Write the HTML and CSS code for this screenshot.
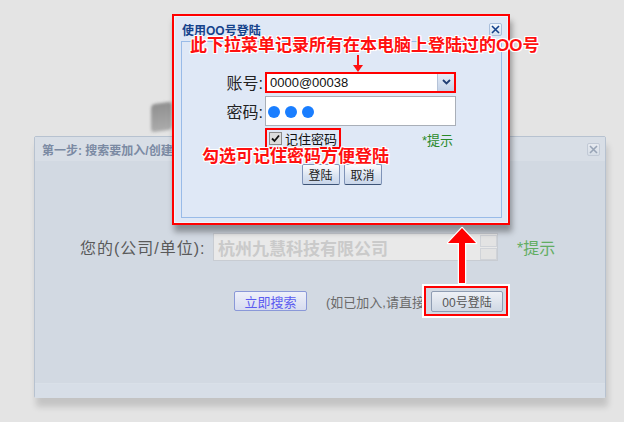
FILE: index.html
```html
<!DOCTYPE html>
<html lang="zh-CN">
<head>
    <meta charset="UTF-8">
    <title>OO号登陆</title>
    <link rel="stylesheet" href="styles.css">
</head>
<body>
    <div class="page">
        <div class="blob"></div>

        <!-- background window: step one -->
        <div class="back-win">
            <div class="back-title">
                <span>第一步: 搜索要加入/创建</span>
                <span class="tool tool-faded">
                    <svg width="9" height="9" viewBox="0 0 9 9"><path d="M1 1L8 8M8 1L1 8" stroke="#98a4b6" stroke-width="1.6"/></svg>
                </span>
            </div>
            <div class="back-body">
                <div class="company-row">
                    <label class="company-label">您的(公司/单位):</label>
                    <div class="company-input">
                        <span class="company-text">杭州九慧科技有限公司</span>
                        <span class="spin">
                            <span class="spin-btn"></span>
                            <span class="spin-btn"></span>
                        </span>
                    </div>
                    <span class="tip-big">*提示</span>
                </div>
                <div class="search-row">
                    <button class="btn btn-search">立即搜索</button>
                    <span class="hint-text">(如已加入,请直接</span>
                    <span class="mark-frame">
                        <button class="btn btn-oo">00号登陆</button>
                    </span>
                </div>
            </div>
            <div class="back-foot"></div>
        </div>

        <!-- login window -->
        <div class="front-win">
            <div class="front-inner">
                <div class="front-title">
                    <span>使用OO号登陆</span>
                    <span class="tool">
                        <svg width="9" height="9" viewBox="0 0 9 9"><path d="M1 1L8 8M8 1L1 8" stroke="#15428b" stroke-width="1.6"/></svg>
                    </span>
                </div>
                <div class="panel">
                    <div class="login-form">
                        <label class="form-label">账号:</label>
                        <div class="combo">
                            <span class="combo-text">0000@00038</span>
                            <span class="combo-trigger">
                                <svg width="9" height="6" viewBox="0 0 9 6"><path d="M1 1L4.5 4.5L8 1" fill="none" stroke="#1f3d73" stroke-width="1.8"/></svg>
                            </span>
                        </div>

                        <label class="form-label">密码:</label>
                        <div class="password">
                            <span class="dot"></span>
                            <span class="dot"></span>
                            <span class="dot"></span>
                        </div>

                        <span></span>
                        <div class="remember-row">
                            <span class="remember">
                                <span class="checkbox">
                                    <svg width="11" height="11" viewBox="0 0 11 11"><path d="M2 5.5L4.5 8L9 2.5" fill="none" stroke="#111" stroke-width="1.8"/></svg>
                                </span>
                                记住密码
                            </span>
                            <span class="tip-small">*提示</span>
                        </div>
                    </div>
                    <div class="form-buttons">
                        <button class="btn btn-small">登陆</button>
                        <button class="btn btn-small">取消</button>
                    </div>
                </div>
            </div>
        </div>

        <!-- callouts -->
        <div class="callout callout-top">此下拉菜单记录所有在本电脑上登陆过的OO号</div>
        <div class="callout callout-mid">勾选可记住密码方便登陆</div>

        <svg class="arrow-small" width="16" height="20" viewBox="0 0 16 20">
            <path d="M8 1V12" stroke="#ff1010" stroke-width="2"/>
            <path d="M3 11H13L8 18Z" fill="#ff1010"/>
        </svg>
        <svg class="arrow-big" width="34" height="62" viewBox="0 0 34 62">
            <path d="M17 3L31 18H20V58H14V18H3Z" fill="#ff0000" stroke="#fff" stroke-width="2.5" stroke-linejoin="round" paint-order="stroke"/>
        </svg>
    </div>
</body>
</html>
```

FILE: styles.css
```css
body {
    margin: 0;
    padding: 0;
    background: #e4e4e4;
    font-family: "Liberation Sans", "Noto Sans CJK SC", sans-serif;
}

.page {
    position: relative;
    width: 624px;
    height: 422px;
    overflow: hidden;
}

.blob {
    position: absolute;
    left: 151px;
    top: 103px;
    width: 21px;
    height: 28px;
    border-radius: 4px;
    background: linear-gradient(#8f8f8f, #ababab);
    filter: blur(1.5px);
    transform: skewY(-8deg);
}

/* ---------- back window ---------- */

.back-win {
    position: absolute;
    left: 34px;
    top: 136px;
    width: 570px;
    height: 260px;
    border: 1px solid #b7c2d0;
    border-radius: 2px;
    background: #d2d9e2;
    box-shadow: 2px 9px 6px rgba(0, 0, 0, 0.14);
}

.back-title {
    display: flex;
    justify-content: space-between;
    align-items: center;
    height: 24px;
    padding: 0 5px 0 7px;
    background: #d8dee6;
    color: #7b8aa3;
    font-size: 12px;
    font-weight: bold;
}

.tool {
    display: flex;
    align-items: center;
    justify-content: center;
    width: 11px;
    height: 11px;
    border: 1px solid #a9bfdc;
    border-radius: 2px;
    background: linear-gradient(#f4f8fd, #d5e2f2);
}

.tool-faded {
    border-color: #c2cad6;
    background: linear-gradient(#e6eaf0, #d6dde6);
}

.back-body {
    height: 222px;
    padding-top: 72px;
    box-sizing: border-box;
}

.back-foot {
    height: 14px;
    background: #d7dee7;
    border-top: 1px solid #d9e0e8;
}

.company-row {
    display: flex;
    align-items: center;
    padding-left: 45px;
}

.company-label {
    width: 125px;
    color: #5a5a5a;
    font-size: 16px;
    letter-spacing: 1px;
    white-space: nowrap;
}

.company-input {
    display: flex;
    align-items: center;
    justify-content: space-between;
    width: 283px;
    height: 26px;
    margin-left: 8px;
    border: 1px solid #c8ccd2;
    background: #e9e9e9;
}

.company-text {
    padding-left: 4px;
    color: #cacaca;
    font-size: 17px;
    font-weight: bold;
}

.spin {
    display: flex;
    flex-direction: column;
    gap: 1px;
}

.spin-btn {
    width: 15px;
    height: 10px;
    border: 1px solid #d0d3d8;
    background: #e3e3e3;
}

.tip-big {
    margin-left: 19px;
    color: #62ad62;
    font-size: 16px;
}

.search-row {
    display: flex;
    align-items: center;
    margin-top: 25px;
    padding-left: 199px;
}

.btn {
    padding: 0;
    border: 1px solid #8ea3c4;
    border-radius: 2px;
    background: linear-gradient(#fbfcfe, #dbe4f1 55%, #c9d6ea);
    color: #222;
    font-family: "Liberation Sans", "Noto Sans CJK SC", sans-serif;
    font-size: 12px;
}

.btn-search {
    width: 73px;
    height: 20px;
    border-color: #8a98d8;
    background: linear-gradient(#eef0fa, #d7dcef);
    color: #5c5cf0;
    font-size: 13px;
}

.hint-text {
    width: 96px;
    margin-left: 19px;
    overflow: hidden;
    white-space: nowrap;
    color: #6a6a6a;
    font-size: 13px;
}

.mark-frame {
    display: flex;
    margin-left: 2px;
    padding: 3px 3px 2px 5px;
    border: 2px solid #ff0000;
    box-shadow: 0 0 0 2px #fff;
}

.btn-oo {
    width: 72px;
    height: 21px;
    border-color: #8f9db3;
    background: linear-gradient(#eef1f6, #cfd8e4);
    color: #555;
}

/* ---------- login window ---------- */

.front-win {
    position: absolute;
    left: 172px;
    top: 14px;
    width: 334px;
    height: 207px;
    border: 2px solid #ff0000;
    box-shadow: 2px 7px 6px rgba(0, 0, 0, 0.35);
}

.front-inner {
    height: 100%;
    box-sizing: border-box;
    padding: 0 5px 4px 6px;
    border: 1px solid #eef3fb;
    background: #dfe8f6;
}

.front-title {
    display: flex;
    justify-content: space-between;
    align-items: center;
    height: 24px;
    padding: 0 0 0 1px;
    color: #15428b;
    font-size: 12px;
    font-weight: bold;
}

.panel {
    height: 177px;
    box-sizing: border-box;
    border: 1px solid #99bbe8;
    background: #dfe8f6;
}

.login-form {
    display: grid;
    grid-template-columns: 81px 191px;
    column-gap: 2px;
    row-gap: 2px;
    padding-top: 28px;
    align-items: center;
}

.form-label {
    text-align: right;
    color: #222;
    font-size: 16px;
}

.combo {
    display: flex;
    align-items: center;
    justify-content: space-between;
    height: 17px;
    border: 2px solid #ff0000;
    background: #fff;
}

.combo-text {
    padding-left: 3px;
    color: #111;
    font-size: 13px;
}

.combo-trigger {
    display: flex;
    align-items: center;
    justify-content: center;
    width: 16px;
    height: 17px;
    border-left: 1px solid #b5c3d8;
    background: linear-gradient(#e6edf7, #c3d2e8);
}

.password {
    display: flex;
    gap: 5px;
    height: 30px;
    box-sizing: border-box;
    padding: 9px 0 0 2px;
    border: 1px solid #a9afb8;
    background: #fff;
}

.dot {
    width: 12px;
    height: 12px;
    border-radius: 50%;
    background: #1a7eff;
}

.remember-row {
    display: flex;
    align-items: center;
    justify-content: space-between;
}

.remember {
    display: flex;
    align-items: center;
    gap: 3px;
    height: 17px;
    padding: 0 2px;
    border: 2px solid #ff0000;
    color: #111;
    font-size: 13px;
}

.checkbox {
    display: flex;
    align-items: center;
    justify-content: center;
    width: 11px;
    height: 11px;
    border: 1px solid #8a8a8a;
    background: #dcdcdc;
}

.tip-small {
    margin: 1px 3px 0 0;
    color: #2a8a2a;
    font-size: 13px;
}

.form-buttons {
    display: flex;
    justify-content: center;
    gap: 4px;
    margin-top: 15px;
}

.btn-small {
    width: 38px;
    height: 21px;
    border-color: #7f93b8;
    border-bottom-color: #3d5478;
}

/* ---------- callouts ---------- */

.callout {
    position: absolute;
    color: #ff1010;
    font-size: 17px;
    font-weight: bold;
    line-height: 18px;
    white-space: nowrap;
    text-shadow: 1px 0 #fff, -1px 0 #fff, 0 1px #fff, 0 -1px #fff,
        1px 1px #fff, -1px -1px #fff, 1px -1px #fff, -1px 1px #fff;
}

.callout-top {
    left: 190px;
    top: 37px;
}

.callout-mid {
    left: 202px;
    top: 148px;
}

.arrow-small {
    position: absolute;
    left: 350px;
    top: 54px;
}

.arrow-big {
    position: absolute;
    left: 445px;
    top: 225px;
}
```
